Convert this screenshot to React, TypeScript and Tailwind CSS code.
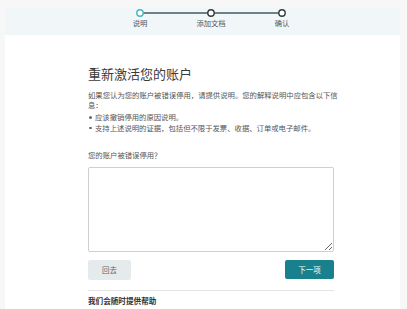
import React from 'react';

const steps = ['说明', '添加文档', '确认'];

const bullets = ['应该撤销停用的原因说明。', '支持上述说明的证据，包括但不限于发票、收据、订单或电子邮件。'];

function Stepper() {
  return (
    <div className="h-[27px] bg-[#f1f7f9] flex flex-col">
      <svg width="152" height="10" viewBox="0 0 152 10" className="ml-[130px] shrink-0">
        <line x1="5" y1="5" x2="147" y2="5" stroke="#3f5b5d" strokeWidth="1.4" />
        <circle cx="5" cy="5" r="3.2" fill="#fff" stroke="#45b3c2" strokeWidth="1.4" />
        <circle cx="76" cy="5" r="3.2" fill="#fff" stroke="#2f3b3c" strokeWidth="1.4" />
        <circle cx="147" cy="5" r="3.2" fill="#fff" stroke="#2f3b3c" strokeWidth="1.4" />
      </svg>
      <div className="ml-[105px] flex gap-[11px]">
        {steps.map((s) => (
          <div key={s} className="w-[60px] text-center text-[7.3px] leading-[10px] text-[#555]">
            {s}
          </div>
        ))}
      </div>
    </div>
  );
}

export default function App() {
  return (
    <div
      className="min-h-screen bg-[#f7f7f7] pt-[8px] pl-[5px] pr-[7px]"
      style={{ fontFamily: '"Noto Sans CJK SC", "Noto Sans", sans-serif' }}
    >
      <div className="bg-white min-h-[301px]">
        <Stepper />
        <div className="pl-[83px] pt-[31px]">
          <div className="w-[246px]">
            <h1 className="text-[13px] leading-[16px] text-[#3a3a3a] font-normal">重新激活您的账户</h1>
            <div className="mt-[8px] text-[7.35px] leading-[9.5px] text-[#555]">
              <span className="block whitespace-nowrap">如果您认为您的账户被错误停用，请提供说明。您的解释说明中应包含以下信</span>
              <span className="block">息：</span>
            </div>
            <ul className="mt-[3px] text-[7.35px] leading-[10.5px] text-[#555]">
              {bullets.map((b) => (
                <li key={b} className="flex items-center">
                  <span className="w-[7px] shrink-0 flex pl-[1px]">
                    <span className="w-[2.5px] h-[2.5px] rounded-full bg-[#666]" />
                  </span>
                  <span>{b}</span>
                </li>
              ))}
            </ul>
            <label className="block mt-[17px] text-[7.35px] leading-[10px] text-[#555]">您的账户被错误停用？</label>
            <textarea className="block mt-[7px] w-[246px] h-[85px] border border-[#cfcfcf] rounded-[2px] bg-white outline-none" />
            <div className="mt-[8px] flex justify-between">
              <button className="w-[43px] h-[20px] bg-[#e5ebec] rounded-[2px] text-[7.5px] text-[#666]">回去</button>
              <button className="w-[49px] h-[19px] bg-[#19808d] rounded-[2px] text-[7.5px] text-white">下一项</button>
            </div>
            <div className="mt-[10px] border-t border-[#e3e3e3]" />
            <p className="mt-[5px] text-[7.6px] leading-[10px] font-bold text-[#333]">我们会随时提供帮助</p>
          </div>
        </div>
      </div>
    </div>
  );
}
